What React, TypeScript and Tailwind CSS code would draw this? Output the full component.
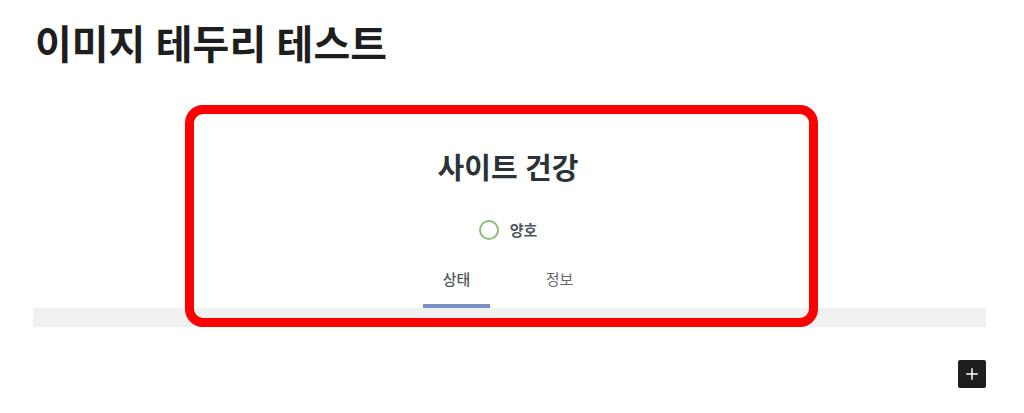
import { Plus } from 'lucide-react'

const font = { fontFamily: '"Noto Sans", "Noto Sans CJK KR", sans-serif' }

export default function App() {
  return (
    <div className="min-h-screen bg-white text-[#1e1e1e]" style={font}>
      <div className="ml-[33px] w-[953px] flex flex-col">
        {/* 제목 */}
        <h1 className="pt-[20px] pl-[2px] text-[40px] leading-[48px] font-bold text-[#1e1e1e]">
          이미지 테두리 테스트
        </h1>

        {/* 이미지 블록 */}
        <div className="relative mt-[37px] flex flex-col">
          <div className="pr-[3px] flex flex-col items-center">
            <h2 className="pt-[47px] text-[29px] leading-[32px] font-semibold text-[#2c3338]">
              사이트 건강
            </h2>

            <div className="mt-[36px] h-5 flex items-center gap-[11px]">
              <span className="w-5 h-5 rounded-full border-2 border-[#8fbb7d]" />
              <span className="text-[15px] font-semibold text-[#50575e]">양호</span>
            </div>

            <div className="mt-[29px] flex gap-[36px]">
              <div className="w-[67px] pb-[15px] border-b-4 border-[#7b8fc4] text-center text-[15px] leading-5 font-medium text-[#50575e]">
                상태
              </div>
              <div className="w-[67px] pb-[15px] border-b-4 border-transparent text-center text-[15px] leading-5 text-[#646970]">
                정보
              </div>
            </div>
          </div>

          <div className="w-full h-[19px] bg-[#f0f0f0]" />

          {/* 빨간 테두리 */}
          <div className="absolute left-[152px] top-0 w-[633px] h-[222px] rounded-[18px] border-[9px] border-[#ff0000] pointer-events-none" />
        </div>

        {/* 블록 추가 */}
        <button
          className="mt-[33px] self-end w-7 h-7 rounded-[2px] bg-[#1e1e1e] text-white flex items-center justify-center"
          aria-label="블록 추가"
        >
          <Plus size={18} strokeWidth={2} />
        </button>
      </div>
    </div>
  )
}
